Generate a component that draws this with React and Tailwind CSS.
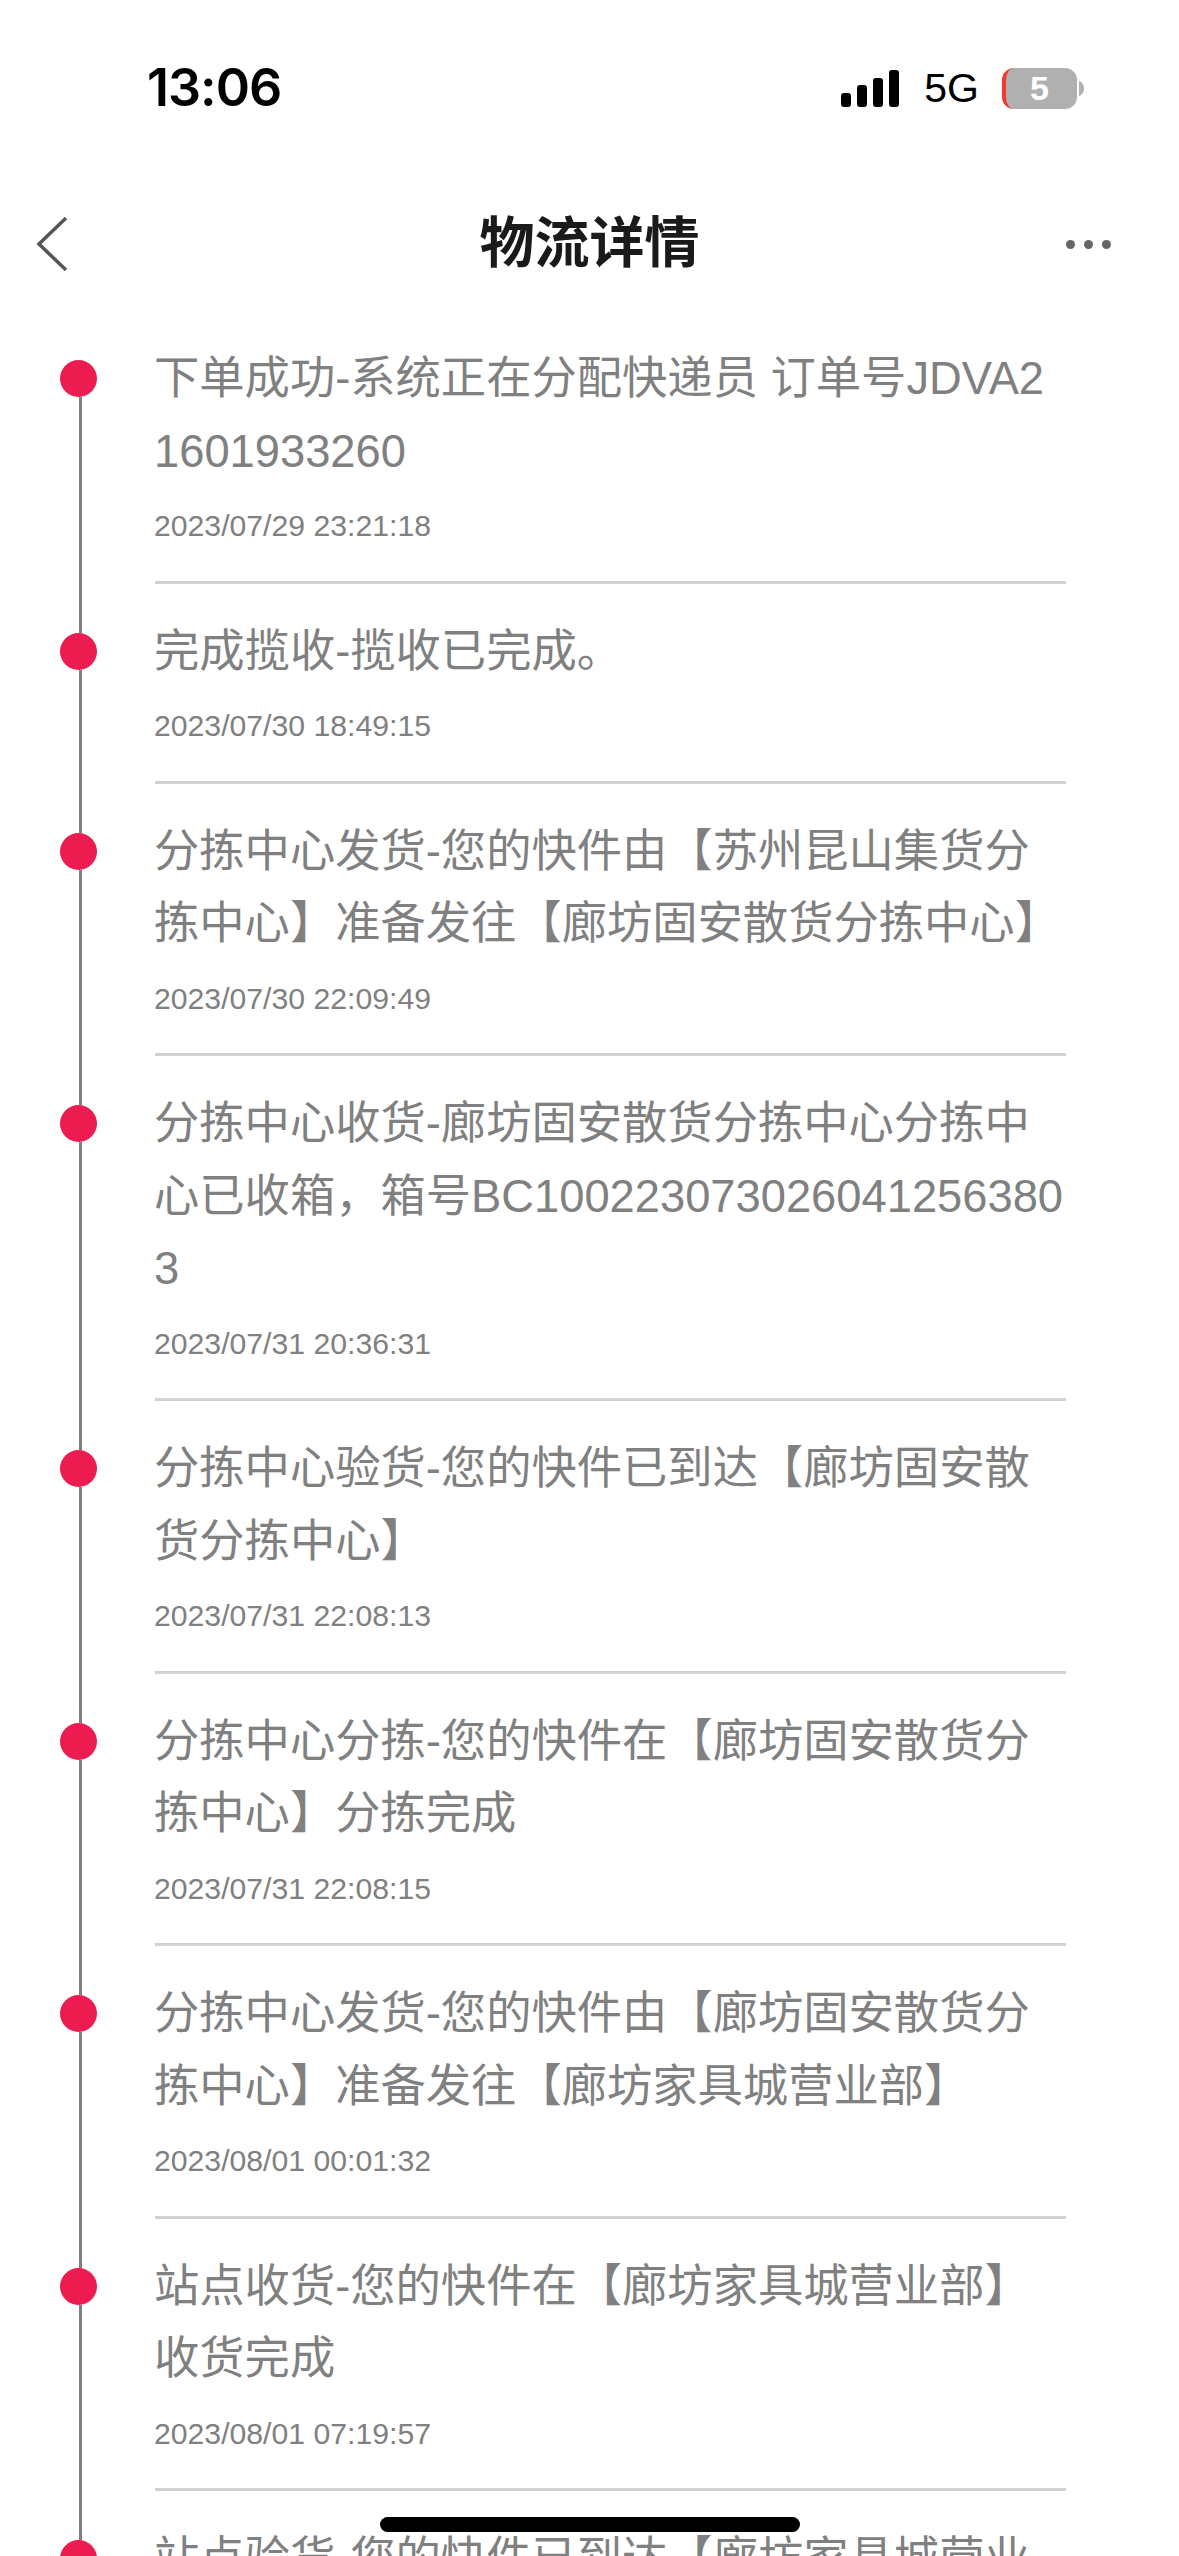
const LOGS = [
  { text: "下单成功-系统正在分配快递员 订单号JDVA21601933260", time: "2023/07/29 23:21:18" },
  { text: "完成揽收-揽收已完成。", time: "2023/07/30 18:49:15" },
  { text: "分拣中心发货-您的快件由【苏州昆山集货分拣中心】准备发往【廊坊固安散货分拣中心】", time: "2023/07/30 22:09:49" },
  { text: "分拣中心收货-廊坊固安散货分拣中心分拣中心已收箱，箱号BC1002230730260412563803", time: "2023/07/31 20:36:31" },
  { text: "分拣中心验货-您的快件已到达【廊坊固安散货分拣中心】", time: "2023/07/31 22:08:13" },
  { text: "分拣中心分拣-您的快件在【廊坊固安散货分拣中心】分拣完成", time: "2023/07/31 22:08:15" },
  { text: "分拣中心发货-您的快件由【廊坊固安散货分拣中心】准备发往【廊坊家具城营业部】", time: "2023/08/01 00:01:32" },
  { text: "站点收货-您的快件在【廊坊家具城营业部】收货完成", time: "2023/08/01 07:19:57" },
  { text: "站点验货-您的快件已到达【廊坊家具城营业部】", time: "2023/08/01 07:40:11" },
];

function StatusBar() {
  return (
    <div className="flex h-[176px] items-center justify-between pl-[147px] pr-[95px]">
      <span className="font-['Inter'] text-[52px] font-semibold leading-none tracking-[-1px] text-black">13:06</span>
      <div className="flex items-center">
        <div className="flex h-[37px] items-end gap-[6px]">
          <div className="h-[14px] w-[10px] rounded-[3px] bg-black" />
          <div className="h-[22px] w-[10px] rounded-[3px] bg-black" />
          <div className="h-[29px] w-[10px] rounded-[3px] bg-black" />
          <div className="h-[37px] w-[10px] rounded-[3px] bg-black" />
        </div>
        <span className="ml-[25px] text-[41px] leading-none text-black">5G</span>
        <div className="ml-[23px] flex items-center">
          <div className="flex h-[41px] w-[75px] items-center justify-center overflow-hidden rounded-[12px] border-l-[4px] border-[#f03a2e] bg-[#b0b0b0] pr-[4px]">
            <span className="text-[34px] font-bold leading-none text-white">5</span>
          </div>
          <svg className="ml-[2px]" width="5" height="15" viewBox="0 0 5 15">
            <path d="M0 0c3 1 5 4 5 7.500s-2 6.500-5 7.500z" fill="#b0b0b0" />
          </svg>
        </div>
      </div>
    </div>
  );
}

function NavBar() {
  return (
    <div className="grid h-[135px] grid-cols-[1fr_auto_1fr] items-center px-[36px]">
      <svg width="32" height="56" viewBox="0 0 32 56" fill="none">
        <path d="M30 2 3 28l27 26" stroke="#555555" strokeWidth="3.500" />
      </svg>
      <h1 className="text-[55px] font-bold leading-none text-[#1a1a1a]">物流详情</h1>
      <div className="flex justify-end gap-[9px] pr-[32px] pt-[2px]">
        <div className="size-[9px] rounded-full bg-[#666666]" />
        <div className="size-[9px] rounded-full bg-[#666666]" />
        <div className="size-[9px] rounded-full bg-[#666666]" />
      </div>
    </div>
  );
}

function LogRow({ text, time, first }) {
  return (
    <div className="flex">
      <div className="flex w-[155px] flex-col pl-[60px]">
        {!first && <div className="ml-[19px] h-[49px] w-[3px] bg-[#808080]" />}
        <div className={`size-[37px] shrink-0 rounded-full bg-[#ec1c50] ${first ? "mt-[49px]" : ""}`} />
        <div className="ml-[19px] w-[3px] flex-1 bg-[#808080]" />
      </div>
      <div className="w-[911px] text-[#808080]">
        <div className="-ml-[1px] pr-[2px] pt-[32px]">
          <p className="break-all text-[45.300px] leading-[72.500px]">{text}</p>
          <p className="mt-[20px] text-[30.200px] leading-[36px]">{time}</p>
        </div>
        <div className="mt-[36.500px] h-[3px] bg-[#d2d2d2]" />
      </div>
    </div>
  );
}

export default function App() {
  return (
    <div className="relative h-[2556px] w-[1179px] overflow-hidden bg-white font-['Liberation_Sans','Noto_Sans_CJK_SC',sans-serif]">
      <StatusBar />
      <NavBar />
      <div>
        {LOGS.map((log, i) => (
          <LogRow key={i} {...log} first={i === 0} />
        ))}
      </div>
      <div className="absolute bottom-[24px] left-[380px] h-[15px] w-[420px] rounded-full bg-black" />
    </div>
  );
}
